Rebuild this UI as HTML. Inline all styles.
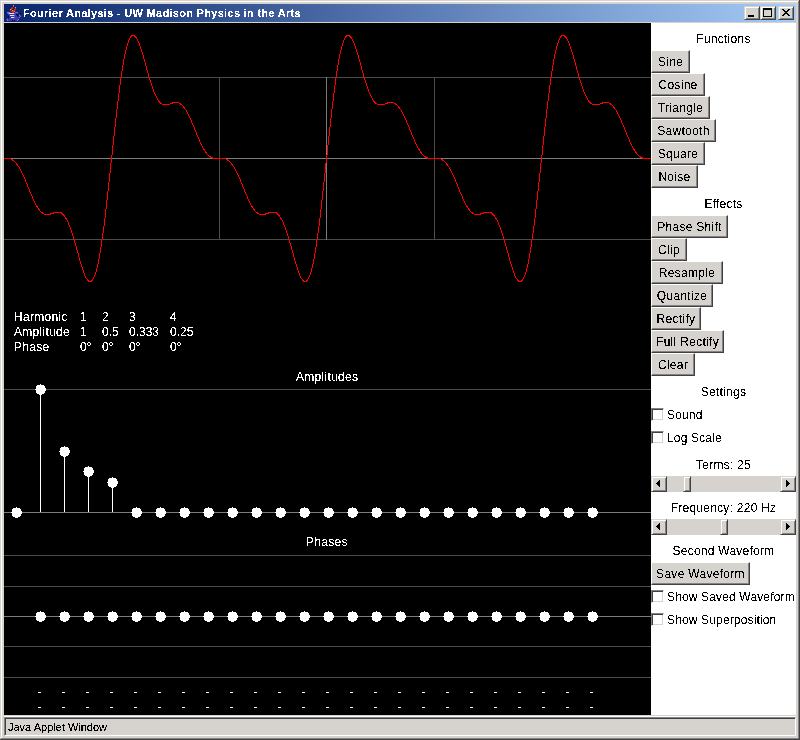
<!DOCTYPE html>
<html><head><meta charset="utf-8"><style>
html,body{margin:0;padding:0}
body{width:800px;height:740px;overflow:hidden;position:relative;background:#D6D3CE;font-family:"Liberation Sans",sans-serif;}
.a{position:absolute}
.btn{position:absolute;box-sizing:border-box;background:#D6D3CE;border-top:1px solid #FFF;border-left:1px solid #FFF;border-right:1px solid #424142;border-bottom:1px solid #424142;box-shadow:inset -1px -1px 0 #848284;font-size:12px;color:#000;text-align:center;line-height:21px;white-space:nowrap}
.btn span{position:relative;top:1px;letter-spacing:0.3px}
.lbl{position:absolute;left:651px;width:145px;text-align:center;font-size:12px;line-height:14px;letter-spacing:0.25px;color:#000;white-space:nowrap;margin-top:1px}
.cb{position:absolute;left:651px;width:145px;height:13px;font-size:12px;color:#000;white-space:nowrap}
.cb .box{position:absolute;left:0;top:0;width:13px;height:13px;box-sizing:border-box;background:#fff;border-top:1px solid #848284;border-left:1px solid #848284;border-right:1px solid #fff;border-bottom:1px solid #fff;box-shadow:inset 1px 1px 0 #424142,inset -1px -1px 0 #D6D3CE}
.cb span{position:absolute;left:16px;top:0px;line-height:14px;letter-spacing:0.15px}
.sb{position:absolute;left:651px;width:145px;height:16px;background:#D6D3CE}
.arr,.thumb{position:absolute;top:0;width:16px;height:16px;box-sizing:border-box;background:#D6D3CE;border-top:1px solid #D6D3CE;border-left:1px solid #D6D3CE;border-right:1px solid #424142;border-bottom:1px solid #424142;box-shadow:inset 1px 1px 0 #fff,inset -1px -1px 0 #848284}
.thumb{width:8px}
.arr.l{left:0} .arr.r{right:0}
.arr svg{position:absolute;left:0;top:0}
.ttl{position:absolute;left:4px;top:4px;width:792px;height:18px;background:linear-gradient(to right,#08246B,#A5CBF7)}
.ttxt{position:absolute;left:23px;letter-spacing:0.3px;top:5px;font-size:11px;font-weight:bold;color:#fff;line-height:16px;white-space:nowrap}
.cbtn{position:absolute;top:6px;width:16px;height:14px;box-sizing:border-box;background:#D6D3CE;border-top:1px solid #D6D3CE;border-left:1px solid #D6D3CE;border-right:1px solid #424142;border-bottom:1px solid #424142;box-shadow:inset 1px 1px 0 #fff,inset -1px -1px 0 #848284}
.txt{position:absolute;font-size:12px;color:#fff;line-height:14px;white-space:nowrap;margin-top:1px}
.ls{letter-spacing:0.3px}
.txt,.lbl,.btn span,.cb span,.ttxt,.stat{filter:url(#bin)}
</style></head><body>
<svg width="0" height="0" style="position:absolute"><filter id="bin" x="-10%" y="-10%" width="120%" height="120%" color-interpolation-filters="sRGB"><feComponentTransfer><feFuncA type="discrete" tableValues="0 0 0 0 0 0 0 0 0 1 1 1 1 1 1 1 1 1 1 1"/></feComponentTransfer></filter></svg>
<div class="a" style="left:0;top:0;width:800px;height:1px;background:#D6D3CE"></div>
<div class="a" style="left:1px;top:1px;width:797px;height:1px;background:#fff"></div>
<div class="a" style="left:1px;top:1px;width:1px;height:737px;background:#fff"></div>
<div class="a" style="left:798px;top:1px;width:1px;height:738px;background:#848284"></div>
<div class="a" style="left:1px;top:738px;width:798px;height:1px;background:#848284"></div>
<div class="a" style="left:799px;top:0;width:1px;height:740px;background:#424142"></div>
<div class="a" style="left:0;top:739px;width:800px;height:1px;background:#424142"></div>
<div class="ttl"></div>
<svg class="a" style="left:4px;top:4px" width="20" height="18" viewBox="0 0 20 18" shape-rendering="crispEdges"><path d="M9 1h1v1h-1zM11 3h1v1h-1zM6 5h1v1h-1z" fill="#F09080"/><path d="M9 2h1v1h-1zM8 3h1v1h-1zM7 4h1v1h-1zM8 4h1v1h-1zM11 4h1v1h-1zM7 5h1v1h-1zM10 5h1v1h-1zM11 5h1v1h-1zM6 6h1v1h-1zM9 6h1v1h-1zM10 6h1v1h-1zM7 7h1v1h-1zM8 7h1v1h-1zM9 7h1v1h-1zM8 8h1v1h-1zM9 8h1v1h-1z" fill="#E02818"/><path d="M8 6h1v1h-1zM10 7h1v1h-1z" fill="#E8A030"/><path d="M3 8h1v1h-1zM4 8h1v1h-1zM5 8h1v1h-1zM11 8h1v1h-1zM12 8h1v1h-1zM13 8h1v1h-1zM4 9h1v1h-1zM10 9h1v1h-1zM10 11h1v1h-1zM15 11h1v1h-1zM16 12h1v1h-1zM10 13h1v1h-1zM15 13h1v1h-1zM3 15h1v1h-1zM14 15h1v1h-1zM3 16h1v1h-1zM13 16h1v1h-1z" fill="#7870D8"/><path d="M6 8h1v1h-1zM3 9h1v1h-1zM11 9h1v1h-1zM12 9h1v1h-1zM13 9h1v1h-1zM4 10h1v1h-1zM5 10h1v1h-1zM6 10h1v1h-1zM7 10h1v1h-1zM8 10h1v1h-1zM9 10h1v1h-1zM10 10h1v1h-1zM11 10h1v1h-1zM15 10h1v1h-1zM5 11h1v1h-1zM11 11h1v1h-1zM12 11h1v1h-1zM16 11h1v1h-1zM5 12h1v1h-1zM6 12h1v1h-1zM7 12h1v1h-1zM8 12h1v1h-1zM9 12h1v1h-1zM10 12h1v1h-1zM11 12h1v1h-1zM12 12h1v1h-1zM15 12h1v1h-1zM6 13h1v1h-1zM11 13h1v1h-1zM12 13h1v1h-1zM13 13h1v1h-1zM14 13h1v1h-1zM3 14h1v1h-1zM5 14h1v1h-1zM6 14h1v1h-1zM7 14h1v1h-1zM8 14h1v1h-1zM9 14h1v1h-1zM10 14h1v1h-1zM11 14h1v1h-1zM12 14h1v1h-1zM13 14h1v1h-1zM14 14h1v1h-1zM2 15h1v1h-1zM4 15h1v1h-1zM5 15h1v1h-1zM6 15h1v1h-1zM7 15h1v1h-1zM8 15h1v1h-1zM9 15h1v1h-1zM10 15h1v1h-1zM11 15h1v1h-1zM12 15h1v1h-1zM13 15h1v1h-1zM4 16h1v1h-1zM5 16h1v1h-1zM6 16h1v1h-1zM7 16h1v1h-1zM9 16h1v1h-1zM11 16h1v1h-1zM12 16h1v1h-1z" fill="#4038A8"/><path d="M5 9h1v1h-1zM6 9h1v1h-1zM7 9h1v1h-1zM8 9h1v1h-1zM9 9h1v1h-1zM6 11h1v1h-1zM7 11h1v1h-1zM8 11h1v1h-1zM9 11h1v1h-1zM7 13h1v1h-1zM8 13h1v1h-1zM9 13h1v1h-1z" fill="#E0E0F0"/><path d="M16 9h1v1h-1zM12 10h1v1h-1zM13 11h1v1h-1zM4 12h1v1h-1zM8 16h1v1h-1zM10 16h1v1h-1z" fill="#000000"/></svg>
<div class="ttxt">Fourier Analysis - UW Madison Physics in the Arts</div>
<div class="cbtn" style="left:744px"><div class="a" style="left:3px;top:8px;width:6px;height:2px;background:#000"></div></div>
<div class="cbtn" style="left:760px"><div class="a" style="left:2px;top:1px;width:9px;height:9px;box-sizing:border-box;border:1px solid #000;border-top-width:2px"></div></div>
<div class="cbtn" style="left:778px"><svg class="a" style="left:3px;top:2px" width="8" height="7" viewBox="0 0 8 7" shape-rendering="crispEdges"><path d="M0 0h2v1h-2zM6 0h2v1h-2zM1 1h2v1h-2zM5 1h2v1h-2zM2 2h4v1h-4zM3 3h2v1h-2zM2 4h4v1h-4zM1 5h2v1h-2zM5 5h2v1h-2zM0 6h2v1h-2zM6 6h2v1h-2z" fill="#000"/></svg></div>
<svg class="a" style="left:4px;top:23px" width="647" height="692" viewBox="4 23 647 692" shape-rendering="crispEdges">
<rect x="4" y="23" width="647" height="692" fill="#000"/>
<path d="M4 77h647v1h-647z" fill="#4A4D4A"/><path d="M4 239h647v1h-647z" fill="#4A4D4A"/><path d="M219 77h1v163h-1z" fill="#4A4D4A"/><path d="M434 77h1v163h-1z" fill="#4A4D4A"/><path d="M326 77h1v163h-1z" fill="#7B7D7B"/><path d="M4 158h647v1h-647z" fill="#7B7D7B"/><path d="M4 389h647v1h-647z" fill="#4A4D4A"/><path d="M4 512h647v1h-647z" fill="#7B7D7B"/><path d="M4 555h647v1h-647z" fill="#4A4D4A"/><path d="M4 586h647v1h-647z" fill="#4A4D4A"/><path d="M4 616h647v1h-647z" fill="#7B7D7B"/><path d="M4 646h647v1h-647z" fill="#4A4D4A"/><path d="M4 677h647v1h-647z" fill="#4A4D4A"/>
<path d="M4 158h1v1h-1zM5 158h1v1h-1zM6 158h1v1h-1zM7 158h1v1h-1zM8 158h1v1h-1zM9 158h1v1h-1zM10 158h1v1h-1zM11 159h1v1h-1zM12 159h1v2h-1zM13 160h1v1h-1zM14 161h1v1h-1zM15 162h1v1h-1zM16 163h1v2h-1zM17 164h1v2h-1zM18 166h1v1h-1zM19 167h1v2h-1zM20 169h1v2h-1zM21 171h1v2h-1zM22 173h1v2h-1zM23 175h1v2h-1zM24 177h1v2h-1zM25 179h1v3h-1zM26 182h1v2h-1zM27 184h1v3h-1zM28 187h1v2h-1zM29 189h1v3h-1zM30 192h1v2h-1zM31 194h1v2h-1zM32 196h1v3h-1zM33 199h1v2h-1zM34 201h1v2h-1zM35 203h1v2h-1zM36 205h1v2h-1zM37 206h1v2h-1zM38 208h1v2h-1zM39 209h1v2h-1zM40 211h1v1h-1zM41 212h1v1h-1zM42 212h1v2h-1zM43 213h1v1h-1zM44 214h1v1h-1zM45 214h1v1h-1zM46 214h1v1h-1zM47 214h1v1h-1zM48 214h1v1h-1zM49 214h1v1h-1zM50 213h1v2h-1zM51 213h1v1h-1zM52 213h1v1h-1zM53 212h1v2h-1zM54 212h1v1h-1zM55 212h1v1h-1zM56 212h1v1h-1zM57 212h1v1h-1zM58 212h1v1h-1zM59 212h1v1h-1zM60 212h1v1h-1zM61 212h1v2h-1zM62 213h1v2h-1zM63 214h1v2h-1zM64 215h1v2h-1zM65 217h1v2h-1zM66 218h1v2h-1zM67 220h1v2h-1zM68 222h1v3h-1zM69 225h1v2h-1zM70 227h1v3h-1zM71 230h1v3h-1zM72 233h1v3h-1zM73 236h1v3h-1zM74 239h1v4h-1zM75 243h1v3h-1zM76 246h1v4h-1zM77 250h1v3h-1zM78 253h1v4h-1zM79 257h1v4h-1zM80 261h1v3h-1zM81 264h1v3h-1zM82 267h1v3h-1zM83 270h1v3h-1zM84 273h1v3h-1zM85 276h1v2h-1zM86 278h1v1h-1zM87 279h1v2h-1zM88 280h1v2h-1zM89 281h1v1h-1zM90 281h1v1h-1zM91 280h1v2h-1zM92 279h1v2h-1zM93 277h1v2h-1zM94 275h1v2h-1zM95 272h1v3h-1zM96 268h1v4h-1zM97 264h1v4h-1zM98 259h1v5h-1zM99 253h1v6h-1zM100 247h1v6h-1zM101 240h1v7h-1zM102 233h1v7h-1zM103 226h1v7h-1zM104 218h1v8h-1zM105 209h1v9h-1zM106 200h1v9h-1zM107 191h1v9h-1zM108 182h1v9h-1zM109 173h1v9h-1zM110 163h1v10h-1zM111 155h1v8h-1zM112 145h1v10h-1zM113 136h1v9h-1zM114 127h1v9h-1zM115 118h1v9h-1zM116 109h1v9h-1zM117 101h1v8h-1zM118 93h1v8h-1zM119 85h1v8h-1zM120 78h1v7h-1zM121 71h1v7h-1zM122 65h1v6h-1zM123 59h1v6h-1zM124 54h1v5h-1zM125 50h1v4h-1zM126 46h1v4h-1zM127 43h1v3h-1zM128 40h1v3h-1zM129 38h1v2h-1zM130 36h1v2h-1zM131 35h1v2h-1zM132 35h1v1h-1zM133 35h1v1h-1zM134 35h1v2h-1zM135 36h1v2h-1zM136 37h1v2h-1zM137 39h1v2h-1zM138 41h1v2h-1zM139 43h1v3h-1zM140 46h1v3h-1zM141 49h1v3h-1zM142 52h1v3h-1zM143 55h1v4h-1zM144 59h1v3h-1zM145 62h1v4h-1zM146 66h1v4h-1zM147 70h1v3h-1zM148 73h1v4h-1zM149 77h1v3h-1zM150 80h1v3h-1zM151 83h1v3h-1zM152 86h1v3h-1zM153 89h1v3h-1zM154 92h1v2h-1zM155 94h1v2h-1zM156 96h1v2h-1zM157 98h1v2h-1zM158 100h1v2h-1zM159 101h1v2h-1zM160 102h1v2h-1zM161 103h1v1h-1zM162 104h1v1h-1zM163 104h1v1h-1zM164 104h1v1h-1zM165 104h1v1h-1zM166 104h1v1h-1zM167 104h1v1h-1zM168 104h1v1h-1zM169 104h1v1h-1zM170 103h1v1h-1zM171 103h1v1h-1zM172 102h1v2h-1zM173 102h1v1h-1zM174 102h1v1h-1zM175 102h1v1h-1zM176 102h1v1h-1zM177 102h1v1h-1zM178 102h1v1h-1zM179 103h1v1h-1zM180 103h1v2h-1zM181 104h1v1h-1zM182 105h1v1h-1zM183 106h1v2h-1zM184 107h1v2h-1zM185 109h1v1h-1zM186 110h1v2h-1zM187 112h1v2h-1zM188 114h1v2h-1zM189 116h1v2h-1zM190 118h1v2h-1zM191 120h1v3h-1zM192 123h1v2h-1zM193 125h1v2h-1zM194 127h1v3h-1zM195 130h1v2h-1zM196 132h1v3h-1zM197 135h1v2h-1zM198 137h1v2h-1zM199 139h1v3h-1zM200 142h1v2h-1zM201 144h1v2h-1zM202 146h1v2h-1zM203 148h1v2h-1zM204 149h1v2h-1zM205 151h1v2h-1zM206 152h1v2h-1zM207 154h1v1h-1zM208 155h1v1h-1zM209 156h1v1h-1zM210 156h1v2h-1zM211 157h1v1h-1zM212 157h1v2h-1zM213 158h1v1h-1zM214 158h1v1h-1zM215 158h1v1h-1zM216 158h1v1h-1zM217 158h1v1h-1zM218 158h1v1h-1zM219 158h1v1h-1zM220 158h1v1h-1zM221 158h1v1h-1zM222 158h1v1h-1zM223 158h1v1h-1zM224 158h1v1h-1zM225 158h1v1h-1zM226 159h1v1h-1zM227 159h1v2h-1zM228 160h1v1h-1zM229 161h1v1h-1zM230 162h1v1h-1zM231 163h1v2h-1zM232 164h1v2h-1zM233 166h1v1h-1zM234 167h1v2h-1zM235 169h1v2h-1zM236 171h1v2h-1zM237 173h1v2h-1zM238 175h1v2h-1zM239 177h1v2h-1zM240 179h1v3h-1zM241 182h1v2h-1zM242 184h1v3h-1zM243 187h1v2h-1zM244 189h1v3h-1zM245 192h1v2h-1zM246 194h1v2h-1zM247 196h1v3h-1zM248 199h1v2h-1zM249 201h1v2h-1zM250 203h1v2h-1zM251 205h1v2h-1zM252 206h1v2h-1zM253 208h1v2h-1zM254 209h1v2h-1zM255 211h1v1h-1zM256 212h1v1h-1zM257 212h1v2h-1zM258 213h1v1h-1zM259 214h1v1h-1zM260 214h1v1h-1zM261 214h1v1h-1zM262 214h1v1h-1zM263 214h1v1h-1zM264 214h1v1h-1zM265 213h1v2h-1zM266 213h1v1h-1zM267 213h1v1h-1zM268 212h1v2h-1zM269 212h1v1h-1zM270 212h1v1h-1zM271 212h1v1h-1zM272 212h1v1h-1zM273 212h1v1h-1zM274 212h1v1h-1zM275 212h1v1h-1zM276 212h1v2h-1zM277 213h1v2h-1zM278 214h1v2h-1zM279 215h1v2h-1zM280 217h1v2h-1zM281 218h1v2h-1zM282 220h1v2h-1zM283 222h1v3h-1zM284 225h1v2h-1zM285 227h1v3h-1zM286 230h1v3h-1zM287 233h1v3h-1zM288 236h1v3h-1zM289 239h1v4h-1zM290 243h1v3h-1zM291 246h1v4h-1zM292 250h1v3h-1zM293 253h1v4h-1zM294 257h1v4h-1zM295 261h1v3h-1zM296 264h1v3h-1zM297 267h1v3h-1zM298 270h1v3h-1zM299 273h1v3h-1zM300 276h1v2h-1zM301 278h1v1h-1zM302 279h1v2h-1zM303 280h1v2h-1zM304 281h1v1h-1zM305 281h1v1h-1zM306 280h1v2h-1zM307 279h1v2h-1zM308 277h1v2h-1zM309 275h1v2h-1zM310 272h1v3h-1zM311 268h1v4h-1zM312 264h1v4h-1zM313 259h1v5h-1zM314 253h1v6h-1zM315 247h1v6h-1zM316 240h1v7h-1zM317 233h1v7h-1zM318 226h1v7h-1zM319 218h1v8h-1zM320 209h1v9h-1zM321 200h1v9h-1zM322 191h1v9h-1zM323 182h1v9h-1zM324 173h1v9h-1zM325 163h1v10h-1zM326 155h1v8h-1zM327 145h1v10h-1zM328 136h1v9h-1zM329 127h1v9h-1zM330 118h1v9h-1zM331 109h1v9h-1zM332 101h1v8h-1zM333 93h1v8h-1zM334 85h1v8h-1zM335 78h1v7h-1zM336 71h1v7h-1zM337 65h1v6h-1zM338 59h1v6h-1zM339 54h1v5h-1zM340 50h1v4h-1zM341 46h1v4h-1zM342 43h1v3h-1zM343 40h1v3h-1zM344 38h1v2h-1zM345 36h1v2h-1zM346 35h1v2h-1zM347 35h1v1h-1zM348 35h1v1h-1zM349 35h1v2h-1zM350 36h1v2h-1zM351 37h1v2h-1zM352 39h1v2h-1zM353 41h1v2h-1zM354 43h1v3h-1zM355 46h1v3h-1zM356 49h1v3h-1zM357 52h1v3h-1zM358 55h1v4h-1zM359 59h1v3h-1zM360 62h1v4h-1zM361 66h1v4h-1zM362 70h1v3h-1zM363 73h1v4h-1zM364 77h1v3h-1zM365 80h1v3h-1zM366 83h1v3h-1zM367 86h1v3h-1zM368 89h1v3h-1zM369 92h1v2h-1zM370 94h1v2h-1zM371 96h1v2h-1zM372 98h1v2h-1zM373 100h1v2h-1zM374 101h1v2h-1zM375 102h1v2h-1zM376 103h1v1h-1zM377 104h1v1h-1zM378 104h1v1h-1zM379 104h1v1h-1zM380 104h1v1h-1zM381 104h1v1h-1zM382 104h1v1h-1zM383 104h1v1h-1zM384 104h1v1h-1zM385 103h1v1h-1zM386 103h1v1h-1zM387 102h1v2h-1zM388 102h1v1h-1zM389 102h1v1h-1zM390 102h1v1h-1zM391 102h1v1h-1zM392 102h1v1h-1zM393 102h1v1h-1zM394 103h1v1h-1zM395 103h1v2h-1zM396 104h1v1h-1zM397 105h1v1h-1zM398 106h1v2h-1zM399 107h1v2h-1zM400 109h1v1h-1zM401 110h1v2h-1zM402 112h1v2h-1zM403 114h1v2h-1zM404 116h1v2h-1zM405 118h1v2h-1zM406 120h1v3h-1zM407 123h1v2h-1zM408 125h1v2h-1zM409 127h1v3h-1zM410 130h1v2h-1zM411 132h1v3h-1zM412 135h1v2h-1zM413 137h1v2h-1zM414 139h1v3h-1zM415 142h1v2h-1zM416 144h1v2h-1zM417 146h1v2h-1zM418 148h1v2h-1zM419 149h1v2h-1zM420 151h1v2h-1zM421 152h1v2h-1zM422 154h1v1h-1zM423 155h1v1h-1zM424 156h1v1h-1zM425 156h1v2h-1zM426 157h1v1h-1zM427 157h1v2h-1zM428 158h1v1h-1zM429 158h1v1h-1zM430 158h1v1h-1zM431 158h1v1h-1zM432 158h1v1h-1zM433 158h1v1h-1zM434 158h1v1h-1zM435 158h1v1h-1zM436 158h1v1h-1zM437 158h1v1h-1zM438 158h1v1h-1zM439 158h1v1h-1zM440 158h1v1h-1zM441 159h1v1h-1zM442 159h1v2h-1zM443 160h1v1h-1zM444 161h1v1h-1zM445 162h1v1h-1zM446 163h1v2h-1zM447 164h1v2h-1zM448 166h1v1h-1zM449 167h1v2h-1zM450 169h1v2h-1zM451 171h1v2h-1zM452 173h1v2h-1zM453 175h1v2h-1zM454 177h1v2h-1zM455 179h1v3h-1zM456 182h1v2h-1zM457 184h1v3h-1zM458 187h1v2h-1zM459 189h1v3h-1zM460 192h1v2h-1zM461 194h1v2h-1zM462 196h1v3h-1zM463 199h1v2h-1zM464 201h1v2h-1zM465 203h1v2h-1zM466 205h1v2h-1zM467 206h1v2h-1zM468 208h1v2h-1zM469 209h1v2h-1zM470 211h1v1h-1zM471 212h1v1h-1zM472 212h1v2h-1zM473 213h1v1h-1zM474 214h1v1h-1zM475 214h1v1h-1zM476 214h1v1h-1zM477 214h1v1h-1zM478 214h1v1h-1zM479 214h1v1h-1zM480 213h1v2h-1zM481 213h1v1h-1zM482 213h1v1h-1zM483 212h1v2h-1zM484 212h1v1h-1zM485 212h1v1h-1zM486 212h1v1h-1zM487 212h1v1h-1zM488 212h1v1h-1zM489 212h1v1h-1zM490 212h1v1h-1zM491 212h1v2h-1zM492 213h1v2h-1zM493 214h1v2h-1zM494 215h1v2h-1zM495 217h1v2h-1zM496 218h1v2h-1zM497 220h1v2h-1zM498 222h1v3h-1zM499 225h1v2h-1zM500 227h1v3h-1zM501 230h1v3h-1zM502 233h1v3h-1zM503 236h1v3h-1zM504 239h1v4h-1zM505 243h1v3h-1zM506 246h1v4h-1zM507 250h1v3h-1zM508 253h1v4h-1zM509 257h1v4h-1zM510 261h1v3h-1zM511 264h1v3h-1zM512 267h1v3h-1zM513 270h1v3h-1zM514 273h1v3h-1zM515 276h1v2h-1zM516 278h1v1h-1zM517 279h1v2h-1zM518 280h1v2h-1zM519 281h1v1h-1zM520 281h1v1h-1zM521 280h1v2h-1zM522 279h1v2h-1zM523 277h1v2h-1zM524 275h1v2h-1zM525 272h1v3h-1zM526 268h1v4h-1zM527 264h1v4h-1zM528 259h1v5h-1zM529 253h1v6h-1zM530 247h1v6h-1zM531 240h1v7h-1zM532 233h1v7h-1zM533 226h1v7h-1zM534 218h1v8h-1zM535 209h1v9h-1zM536 200h1v9h-1zM537 191h1v9h-1zM538 182h1v9h-1zM539 173h1v9h-1zM540 163h1v10h-1zM541 155h1v8h-1zM542 145h1v10h-1zM543 136h1v9h-1zM544 127h1v9h-1zM545 118h1v9h-1zM546 109h1v9h-1zM547 101h1v8h-1zM548 93h1v8h-1zM549 85h1v8h-1zM550 78h1v7h-1zM551 71h1v7h-1zM552 65h1v6h-1zM553 59h1v6h-1zM554 54h1v5h-1zM555 50h1v4h-1zM556 46h1v4h-1zM557 43h1v3h-1zM558 40h1v3h-1zM559 38h1v2h-1zM560 36h1v2h-1zM561 35h1v2h-1zM562 35h1v1h-1zM563 35h1v1h-1zM564 35h1v2h-1zM565 36h1v2h-1zM566 37h1v2h-1zM567 39h1v2h-1zM568 41h1v2h-1zM569 43h1v3h-1zM570 46h1v3h-1zM571 49h1v3h-1zM572 52h1v3h-1zM573 55h1v4h-1zM574 59h1v3h-1zM575 62h1v4h-1zM576 66h1v4h-1zM577 70h1v3h-1zM578 73h1v4h-1zM579 77h1v3h-1zM580 80h1v3h-1zM581 83h1v3h-1zM582 86h1v3h-1zM583 89h1v3h-1zM584 92h1v2h-1zM585 94h1v2h-1zM586 96h1v2h-1zM587 98h1v2h-1zM588 100h1v2h-1zM589 101h1v2h-1zM590 102h1v2h-1zM591 103h1v1h-1zM592 104h1v1h-1zM593 104h1v1h-1zM594 104h1v1h-1zM595 104h1v1h-1zM596 104h1v1h-1zM597 104h1v1h-1zM598 104h1v1h-1zM599 104h1v1h-1zM600 103h1v1h-1zM601 103h1v1h-1zM602 102h1v2h-1zM603 102h1v1h-1zM604 102h1v1h-1zM605 102h1v1h-1zM606 102h1v1h-1zM607 102h1v1h-1zM608 102h1v1h-1zM609 103h1v1h-1zM610 103h1v2h-1zM611 104h1v1h-1zM612 105h1v1h-1zM613 106h1v2h-1zM614 107h1v2h-1zM615 109h1v1h-1zM616 110h1v2h-1zM617 112h1v2h-1zM618 114h1v2h-1zM619 116h1v2h-1zM620 118h1v2h-1zM621 120h1v3h-1zM622 123h1v2h-1zM623 125h1v2h-1zM624 127h1v3h-1zM625 130h1v2h-1zM626 132h1v3h-1zM627 135h1v2h-1zM628 137h1v2h-1zM629 139h1v3h-1zM630 142h1v2h-1zM631 144h1v2h-1zM632 146h1v2h-1zM633 148h1v2h-1zM634 149h1v2h-1zM635 151h1v2h-1zM636 152h1v2h-1zM637 154h1v1h-1zM638 155h1v1h-1zM639 156h1v1h-1zM640 156h1v2h-1zM641 157h1v1h-1zM642 157h1v2h-1zM643 158h1v1h-1zM644 158h1v1h-1zM645 158h1v1h-1zM646 158h1v1h-1zM647 158h1v1h-1zM648 158h1v1h-1zM649 158h1v1h-1zM650 158h1v1h-1z" fill="#FF0000"/>
<path d="M40 389h1v123h-1zM64 451h1v61h-1zM88 471h1v41h-1zM112 482h1v30h-1zM16 507h1v1h-1zM13 508h7v1h-7zM12 509h9v1h-9zM12 510h9v1h-9zM12 511h10v1h-10zM11 512h11v1h-11zM12 513h10v1h-10zM12 514h9v1h-9zM12 515h9v1h-9zM13 516h7v1h-7zM15 517h3v1h-3zM40 384h1v1h-1zM37 385h7v1h-7zM36 386h9v1h-9zM36 387h9v1h-9zM36 388h10v1h-10zM35 389h11v1h-11zM36 390h10v1h-10zM36 391h9v1h-9zM36 392h9v1h-9zM37 393h7v1h-7zM39 394h3v1h-3zM64 446h1v1h-1zM61 447h7v1h-7zM60 448h9v1h-9zM60 449h9v1h-9zM60 450h10v1h-10zM59 451h11v1h-11zM60 452h10v1h-10zM60 453h9v1h-9zM60 454h9v1h-9zM61 455h7v1h-7zM63 456h3v1h-3zM88 466h1v1h-1zM85 467h7v1h-7zM84 468h9v1h-9zM84 469h9v1h-9zM84 470h10v1h-10zM83 471h11v1h-11zM84 472h10v1h-10zM84 473h9v1h-9zM84 474h9v1h-9zM85 475h7v1h-7zM87 476h3v1h-3zM112 477h1v1h-1zM109 478h7v1h-7zM108 479h9v1h-9zM108 480h9v1h-9zM108 481h10v1h-10zM107 482h11v1h-11zM108 483h10v1h-10zM108 484h9v1h-9zM108 485h9v1h-9zM109 486h7v1h-7zM111 487h3v1h-3zM136 507h1v1h-1zM133 508h7v1h-7zM132 509h9v1h-9zM132 510h9v1h-9zM132 511h10v1h-10zM131 512h11v1h-11zM132 513h10v1h-10zM132 514h9v1h-9zM132 515h9v1h-9zM133 516h7v1h-7zM135 517h3v1h-3zM160 507h1v1h-1zM157 508h7v1h-7zM156 509h9v1h-9zM156 510h9v1h-9zM156 511h10v1h-10zM155 512h11v1h-11zM156 513h10v1h-10zM156 514h9v1h-9zM156 515h9v1h-9zM157 516h7v1h-7zM159 517h3v1h-3zM184 507h1v1h-1zM181 508h7v1h-7zM180 509h9v1h-9zM180 510h9v1h-9zM180 511h10v1h-10zM179 512h11v1h-11zM180 513h10v1h-10zM180 514h9v1h-9zM180 515h9v1h-9zM181 516h7v1h-7zM183 517h3v1h-3zM208 507h1v1h-1zM205 508h7v1h-7zM204 509h9v1h-9zM204 510h9v1h-9zM204 511h10v1h-10zM203 512h11v1h-11zM204 513h10v1h-10zM204 514h9v1h-9zM204 515h9v1h-9zM205 516h7v1h-7zM207 517h3v1h-3zM232 507h1v1h-1zM229 508h7v1h-7zM228 509h9v1h-9zM228 510h9v1h-9zM228 511h10v1h-10zM227 512h11v1h-11zM228 513h10v1h-10zM228 514h9v1h-9zM228 515h9v1h-9zM229 516h7v1h-7zM231 517h3v1h-3zM256 507h1v1h-1zM253 508h7v1h-7zM252 509h9v1h-9zM252 510h9v1h-9zM252 511h10v1h-10zM251 512h11v1h-11zM252 513h10v1h-10zM252 514h9v1h-9zM252 515h9v1h-9zM253 516h7v1h-7zM255 517h3v1h-3zM280 507h1v1h-1zM277 508h7v1h-7zM276 509h9v1h-9zM276 510h9v1h-9zM276 511h10v1h-10zM275 512h11v1h-11zM276 513h10v1h-10zM276 514h9v1h-9zM276 515h9v1h-9zM277 516h7v1h-7zM279 517h3v1h-3zM304 507h1v1h-1zM301 508h7v1h-7zM300 509h9v1h-9zM300 510h9v1h-9zM300 511h10v1h-10zM299 512h11v1h-11zM300 513h10v1h-10zM300 514h9v1h-9zM300 515h9v1h-9zM301 516h7v1h-7zM303 517h3v1h-3zM328 507h1v1h-1zM325 508h7v1h-7zM324 509h9v1h-9zM324 510h9v1h-9zM324 511h10v1h-10zM323 512h11v1h-11zM324 513h10v1h-10zM324 514h9v1h-9zM324 515h9v1h-9zM325 516h7v1h-7zM327 517h3v1h-3zM352 507h1v1h-1zM349 508h7v1h-7zM348 509h9v1h-9zM348 510h9v1h-9zM348 511h10v1h-10zM347 512h11v1h-11zM348 513h10v1h-10zM348 514h9v1h-9zM348 515h9v1h-9zM349 516h7v1h-7zM351 517h3v1h-3zM376 507h1v1h-1zM373 508h7v1h-7zM372 509h9v1h-9zM372 510h9v1h-9zM372 511h10v1h-10zM371 512h11v1h-11zM372 513h10v1h-10zM372 514h9v1h-9zM372 515h9v1h-9zM373 516h7v1h-7zM375 517h3v1h-3zM400 507h1v1h-1zM397 508h7v1h-7zM396 509h9v1h-9zM396 510h9v1h-9zM396 511h10v1h-10zM395 512h11v1h-11zM396 513h10v1h-10zM396 514h9v1h-9zM396 515h9v1h-9zM397 516h7v1h-7zM399 517h3v1h-3zM424 507h1v1h-1zM421 508h7v1h-7zM420 509h9v1h-9zM420 510h9v1h-9zM420 511h10v1h-10zM419 512h11v1h-11zM420 513h10v1h-10zM420 514h9v1h-9zM420 515h9v1h-9zM421 516h7v1h-7zM423 517h3v1h-3zM448 507h1v1h-1zM445 508h7v1h-7zM444 509h9v1h-9zM444 510h9v1h-9zM444 511h10v1h-10zM443 512h11v1h-11zM444 513h10v1h-10zM444 514h9v1h-9zM444 515h9v1h-9zM445 516h7v1h-7zM447 517h3v1h-3zM472 507h1v1h-1zM469 508h7v1h-7zM468 509h9v1h-9zM468 510h9v1h-9zM468 511h10v1h-10zM467 512h11v1h-11zM468 513h10v1h-10zM468 514h9v1h-9zM468 515h9v1h-9zM469 516h7v1h-7zM471 517h3v1h-3zM496 507h1v1h-1zM493 508h7v1h-7zM492 509h9v1h-9zM492 510h9v1h-9zM492 511h10v1h-10zM491 512h11v1h-11zM492 513h10v1h-10zM492 514h9v1h-9zM492 515h9v1h-9zM493 516h7v1h-7zM495 517h3v1h-3zM520 507h1v1h-1zM517 508h7v1h-7zM516 509h9v1h-9zM516 510h9v1h-9zM516 511h10v1h-10zM515 512h11v1h-11zM516 513h10v1h-10zM516 514h9v1h-9zM516 515h9v1h-9zM517 516h7v1h-7zM519 517h3v1h-3zM544 507h1v1h-1zM541 508h7v1h-7zM540 509h9v1h-9zM540 510h9v1h-9zM540 511h10v1h-10zM539 512h11v1h-11zM540 513h10v1h-10zM540 514h9v1h-9zM540 515h9v1h-9zM541 516h7v1h-7zM543 517h3v1h-3zM568 507h1v1h-1zM565 508h7v1h-7zM564 509h9v1h-9zM564 510h9v1h-9zM564 511h10v1h-10zM563 512h11v1h-11zM564 513h10v1h-10zM564 514h9v1h-9zM564 515h9v1h-9zM565 516h7v1h-7zM567 517h3v1h-3zM592 507h1v1h-1zM589 508h7v1h-7zM588 509h9v1h-9zM588 510h9v1h-9zM588 511h10v1h-10zM587 512h11v1h-11zM588 513h10v1h-10zM588 514h9v1h-9zM588 515h9v1h-9zM589 516h7v1h-7zM591 517h3v1h-3zM40 611h1v1h-1zM37 612h7v1h-7zM36 613h9v1h-9zM36 614h9v1h-9zM36 615h10v1h-10zM35 616h11v1h-11zM36 617h10v1h-10zM36 618h9v1h-9zM36 619h9v1h-9zM37 620h7v1h-7zM39 621h3v1h-3zM64 611h1v1h-1zM61 612h7v1h-7zM60 613h9v1h-9zM60 614h9v1h-9zM60 615h10v1h-10zM59 616h11v1h-11zM60 617h10v1h-10zM60 618h9v1h-9zM60 619h9v1h-9zM61 620h7v1h-7zM63 621h3v1h-3zM88 611h1v1h-1zM85 612h7v1h-7zM84 613h9v1h-9zM84 614h9v1h-9zM84 615h10v1h-10zM83 616h11v1h-11zM84 617h10v1h-10zM84 618h9v1h-9zM84 619h9v1h-9zM85 620h7v1h-7zM87 621h3v1h-3zM112 611h1v1h-1zM109 612h7v1h-7zM108 613h9v1h-9zM108 614h9v1h-9zM108 615h10v1h-10zM107 616h11v1h-11zM108 617h10v1h-10zM108 618h9v1h-9zM108 619h9v1h-9zM109 620h7v1h-7zM111 621h3v1h-3zM136 611h1v1h-1zM133 612h7v1h-7zM132 613h9v1h-9zM132 614h9v1h-9zM132 615h10v1h-10zM131 616h11v1h-11zM132 617h10v1h-10zM132 618h9v1h-9zM132 619h9v1h-9zM133 620h7v1h-7zM135 621h3v1h-3zM160 611h1v1h-1zM157 612h7v1h-7zM156 613h9v1h-9zM156 614h9v1h-9zM156 615h10v1h-10zM155 616h11v1h-11zM156 617h10v1h-10zM156 618h9v1h-9zM156 619h9v1h-9zM157 620h7v1h-7zM159 621h3v1h-3zM184 611h1v1h-1zM181 612h7v1h-7zM180 613h9v1h-9zM180 614h9v1h-9zM180 615h10v1h-10zM179 616h11v1h-11zM180 617h10v1h-10zM180 618h9v1h-9zM180 619h9v1h-9zM181 620h7v1h-7zM183 621h3v1h-3zM208 611h1v1h-1zM205 612h7v1h-7zM204 613h9v1h-9zM204 614h9v1h-9zM204 615h10v1h-10zM203 616h11v1h-11zM204 617h10v1h-10zM204 618h9v1h-9zM204 619h9v1h-9zM205 620h7v1h-7zM207 621h3v1h-3zM232 611h1v1h-1zM229 612h7v1h-7zM228 613h9v1h-9zM228 614h9v1h-9zM228 615h10v1h-10zM227 616h11v1h-11zM228 617h10v1h-10zM228 618h9v1h-9zM228 619h9v1h-9zM229 620h7v1h-7zM231 621h3v1h-3zM256 611h1v1h-1zM253 612h7v1h-7zM252 613h9v1h-9zM252 614h9v1h-9zM252 615h10v1h-10zM251 616h11v1h-11zM252 617h10v1h-10zM252 618h9v1h-9zM252 619h9v1h-9zM253 620h7v1h-7zM255 621h3v1h-3zM280 611h1v1h-1zM277 612h7v1h-7zM276 613h9v1h-9zM276 614h9v1h-9zM276 615h10v1h-10zM275 616h11v1h-11zM276 617h10v1h-10zM276 618h9v1h-9zM276 619h9v1h-9zM277 620h7v1h-7zM279 621h3v1h-3zM304 611h1v1h-1zM301 612h7v1h-7zM300 613h9v1h-9zM300 614h9v1h-9zM300 615h10v1h-10zM299 616h11v1h-11zM300 617h10v1h-10zM300 618h9v1h-9zM300 619h9v1h-9zM301 620h7v1h-7zM303 621h3v1h-3zM328 611h1v1h-1zM325 612h7v1h-7zM324 613h9v1h-9zM324 614h9v1h-9zM324 615h10v1h-10zM323 616h11v1h-11zM324 617h10v1h-10zM324 618h9v1h-9zM324 619h9v1h-9zM325 620h7v1h-7zM327 621h3v1h-3zM352 611h1v1h-1zM349 612h7v1h-7zM348 613h9v1h-9zM348 614h9v1h-9zM348 615h10v1h-10zM347 616h11v1h-11zM348 617h10v1h-10zM348 618h9v1h-9zM348 619h9v1h-9zM349 620h7v1h-7zM351 621h3v1h-3zM376 611h1v1h-1zM373 612h7v1h-7zM372 613h9v1h-9zM372 614h9v1h-9zM372 615h10v1h-10zM371 616h11v1h-11zM372 617h10v1h-10zM372 618h9v1h-9zM372 619h9v1h-9zM373 620h7v1h-7zM375 621h3v1h-3zM400 611h1v1h-1zM397 612h7v1h-7zM396 613h9v1h-9zM396 614h9v1h-9zM396 615h10v1h-10zM395 616h11v1h-11zM396 617h10v1h-10zM396 618h9v1h-9zM396 619h9v1h-9zM397 620h7v1h-7zM399 621h3v1h-3zM424 611h1v1h-1zM421 612h7v1h-7zM420 613h9v1h-9zM420 614h9v1h-9zM420 615h10v1h-10zM419 616h11v1h-11zM420 617h10v1h-10zM420 618h9v1h-9zM420 619h9v1h-9zM421 620h7v1h-7zM423 621h3v1h-3zM448 611h1v1h-1zM445 612h7v1h-7zM444 613h9v1h-9zM444 614h9v1h-9zM444 615h10v1h-10zM443 616h11v1h-11zM444 617h10v1h-10zM444 618h9v1h-9zM444 619h9v1h-9zM445 620h7v1h-7zM447 621h3v1h-3zM472 611h1v1h-1zM469 612h7v1h-7zM468 613h9v1h-9zM468 614h9v1h-9zM468 615h10v1h-10zM467 616h11v1h-11zM468 617h10v1h-10zM468 618h9v1h-9zM468 619h9v1h-9zM469 620h7v1h-7zM471 621h3v1h-3zM496 611h1v1h-1zM493 612h7v1h-7zM492 613h9v1h-9zM492 614h9v1h-9zM492 615h10v1h-10zM491 616h11v1h-11zM492 617h10v1h-10zM492 618h9v1h-9zM492 619h9v1h-9zM493 620h7v1h-7zM495 621h3v1h-3zM520 611h1v1h-1zM517 612h7v1h-7zM516 613h9v1h-9zM516 614h9v1h-9zM516 615h10v1h-10zM515 616h11v1h-11zM516 617h10v1h-10zM516 618h9v1h-9zM516 619h9v1h-9zM517 620h7v1h-7zM519 621h3v1h-3zM544 611h1v1h-1zM541 612h7v1h-7zM540 613h9v1h-9zM540 614h9v1h-9zM540 615h10v1h-10zM539 616h11v1h-11zM540 617h10v1h-10zM540 618h9v1h-9zM540 619h9v1h-9zM541 620h7v1h-7zM543 621h3v1h-3zM568 611h1v1h-1zM565 612h7v1h-7zM564 613h9v1h-9zM564 614h9v1h-9zM564 615h10v1h-10zM563 616h11v1h-11zM564 617h10v1h-10zM564 618h9v1h-9zM564 619h9v1h-9zM565 620h7v1h-7zM567 621h3v1h-3zM592 611h1v1h-1zM589 612h7v1h-7zM588 613h9v1h-9zM588 614h9v1h-9zM588 615h10v1h-10zM587 616h11v1h-11zM588 617h10v1h-10zM588 618h9v1h-9zM588 619h9v1h-9zM589 620h7v1h-7zM591 621h3v1h-3zM38 692h3v1h-3zM38 707h3v1h-3zM62 692h3v1h-3zM62 707h3v1h-3zM86 692h3v1h-3zM86 707h3v1h-3zM110 692h3v1h-3zM110 707h3v1h-3zM134 692h3v1h-3zM134 707h3v1h-3zM158 692h3v1h-3zM158 707h3v1h-3zM182 692h3v1h-3zM182 707h3v1h-3zM206 692h3v1h-3zM206 707h3v1h-3zM230 692h3v1h-3zM230 707h3v1h-3zM254 692h3v1h-3zM254 707h3v1h-3zM278 692h3v1h-3zM278 707h3v1h-3zM302 692h3v1h-3zM302 707h3v1h-3zM326 692h3v1h-3zM326 707h3v1h-3zM350 692h3v1h-3zM350 707h3v1h-3zM374 692h3v1h-3zM374 707h3v1h-3zM398 692h3v1h-3zM398 707h3v1h-3zM422 692h3v1h-3zM422 707h3v1h-3zM446 692h3v1h-3zM446 707h3v1h-3zM470 692h3v1h-3zM470 707h3v1h-3zM494 692h3v1h-3zM494 707h3v1h-3zM518 692h3v1h-3zM518 707h3v1h-3zM542 692h3v1h-3zM542 707h3v1h-3zM566 692h3v1h-3zM566 707h3v1h-3zM590 692h3v1h-3zM590 707h3v1h-3z" fill="#FFFFFF"/>
</svg>
<div class="a" style="left:651px;top:23px;width:145px;height:692px;background:#fff"></div>
<div class="txt ls" style="left:14px;top:309px">Harmonic</div>
<div class="txt ls" style="left:14px;top:324px">Amplitude</div>
<div class="txt ls" style="left:14px;top:339px">Phase</div>
<div class="txt" style="left:80px;top:309px">1</div><div class="txt" style="left:80px;top:324px">1</div><div class="txt" style="left:80px;top:339px">0°</div>
<div class="txt" style="left:102px;top:309px">2</div><div class="txt" style="left:102px;top:324px">0.5</div><div class="txt" style="left:102px;top:339px">0°</div>
<div class="txt" style="left:129px;top:309px">3</div><div class="txt" style="left:129px;top:324px">0.333</div><div class="txt" style="left:129px;top:339px">0°</div>
<div class="txt" style="left:170px;top:309px">4</div><div class="txt" style="left:170px;top:324px">0.25</div><div class="txt" style="left:170px;top:339px">0°</div>
<div class="txt ls" style="left:296px;top:369px">Amplitudes</div>
<div class="txt ls" style="left:306px;top:534px">Phases</div>
<div class="lbl" style="top:31px">Functions</div>
<div class="btn" style="left:651px;top:50px;width:39px;height:23px"><span>Sine</span></div><div class="btn" style="left:651px;top:73px;width:54px;height:23px"><span>Cosine</span></div><div class="btn" style="left:651px;top:96px;width:59px;height:23px"><span>Triangle</span></div><div class="btn" style="left:651px;top:119px;width:65px;height:23px"><span>Sawtooth</span></div><div class="btn" style="left:651px;top:142px;width:54px;height:23px"><span>Square</span></div><div class="btn" style="left:651px;top:165px;width:47px;height:23px"><span>Noise</span></div>
<div class="lbl" style="top:196px">Effects</div>
<div class="btn" style="left:651px;top:215px;width:77px;height:23px"><span>Phase Shift</span></div><div class="btn" style="left:651px;top:238px;width:36px;height:23px"><span>Clip</span></div><div class="btn" style="left:651px;top:261px;width:72px;height:23px"><span>Resample</span></div><div class="btn" style="left:651px;top:284px;width:62px;height:23px"><span>Quantize</span></div><div class="btn" style="left:651px;top:307px;width:50px;height:23px"><span>Rectify</span></div><div class="btn" style="left:651px;top:330px;width:73px;height:23px"><span>Full Rectify</span></div><div class="btn" style="left:651px;top:353px;width:44px;height:23px"><span>Clear</span></div>
<div class="lbl" style="top:384px">Settings</div>
<div class="cb" style="top:408px"><div class="box"></div><span>Sound</span></div>
<div class="cb" style="top:431px"><div class="box"></div><span>Log Scale</span></div>
<div class="lbl" style="top:457px">Terms: 25</div>
<div class="sb" style="top:476px"><div class="arr l"><svg width="16" height="16" viewBox="1 1 16 16" shape-rendering="crispEdges"><path d="M8 4h1v7h-1zM7 5h1v5h-1zM6 6h1v3h-1zM5 7h1v1h-1z" fill="#000"/></svg></div><div class="thumb" style="left:32px"></div><div class="arr r"><svg width="16" height="16" viewBox="1 1 16 16" shape-rendering="crispEdges"><path d="M6 4h1v7h-1zM7 5h1v5h-1zM8 6h1v3h-1zM9 7h1v1h-1z" fill="#000"/></svg></div></div>
<div class="lbl" style="top:500px">Frequency: 220 Hz</div>
<div class="sb" style="top:519px"><div class="arr l"><svg width="16" height="16" viewBox="1 1 16 16" shape-rendering="crispEdges"><path d="M8 4h1v7h-1zM7 5h1v5h-1zM6 6h1v3h-1zM5 7h1v1h-1z" fill="#000"/></svg></div><div class="thumb" style="left:69px"></div><div class="arr r"><svg width="16" height="16" viewBox="1 1 16 16" shape-rendering="crispEdges"><path d="M6 4h1v7h-1zM7 5h1v5h-1zM8 6h1v3h-1zM9 7h1v1h-1z" fill="#000"/></svg></div></div>
<div class="lbl" style="top:543px">Second Waveform</div>
<div class="btn" style="left:651px;top:562px;width:99px;height:23px"><span>Save Waveform</span></div>
<div class="cb" style="top:590px"><div class="box"></div><span>Show Saved Waveform</span></div>
<div class="cb" style="top:613px"><div class="box"></div><span>Show Superposition</span></div>
<div class="a" style="left:4px;top:715px;width:792px;height:1px;background:#D6D3CE"></div>
<div class="a" style="left:4px;top:716px;width:792px;height:1px;background:#fff"></div>
<div class="a" style="left:4px;top:717px;width:792px;height:19px;box-sizing:border-box;border-top:1px solid #848284;border-left:1px solid #848284;border-right:1px solid #fff;border-bottom:1px solid #fff;box-shadow:inset 1px 1px 0 #424142"></div>
<div class="a stat" style="left:8px;top:720px;font-size:11px;line-height:14px;color:#000;white-space:nowrap">Java Applet Window</div>
</body></html>
